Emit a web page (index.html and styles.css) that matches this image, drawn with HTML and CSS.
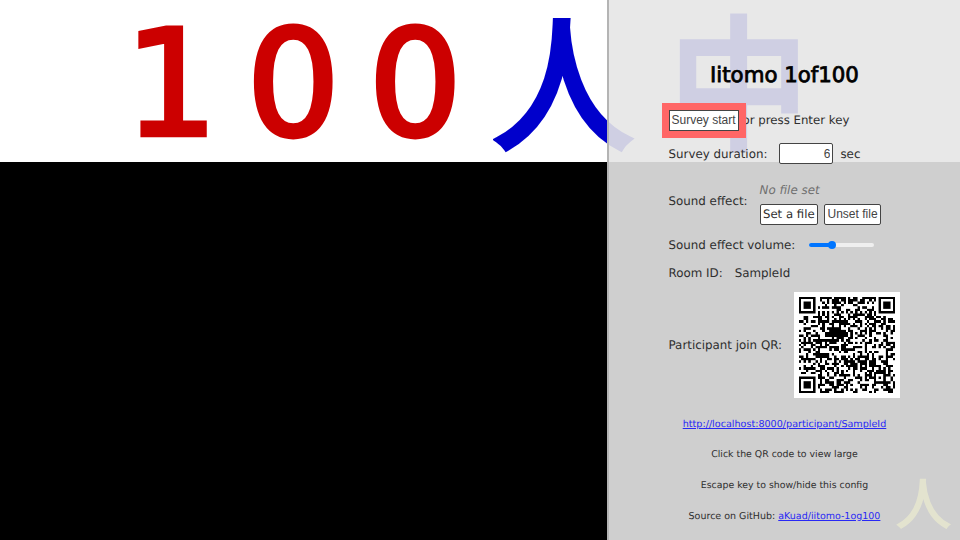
FILE: index.html
```
<!DOCTYPE html>
<html lang="ja">
<head>
<meta charset="utf-8">
<title>Iitomo 1of100</title>
<link rel="stylesheet" href="styles.css">
</head>
<body>
<header class="board">100<span class="kanji">人中</span></header>
<div class="unit">人</div>
<aside class="config">
  <h1 class="title">Iitomo 1of100</h1>
  <div class="row row-start"><button class="btn start">Survey start</button><span class="hint">or press Enter key</span></div>
  <div class="row row-duration"><label>Survey duration:</label><input class="duration" type="text" value="6"><span>sec</span></div>
  <div class="row row-sound">
    <span>Sound effect:</span>
    <div class="sound">
      <div class="nofile">No file set</div>
      <div class="files"><label class="btn pick">Set a file</label><button class="btn unset">Unset file</button></div>
    </div>
  </div>
  <div class="row row-volume"><span>Sound effect volume:</span><div class="slider"><div class="fill"></div><div class="thumb"></div></div></div>
  <div class="row row-room"><span>Room ID:</span><span>SampleId</span></div>
  <div class="row row-qr"><span>Participant join QR:</span><div class="qr"><canvas id="qr" width="256" height="256"></canvas></div></div>
  <p class="note url"><a href="#">http://localhost:8000/participant/SampleId</a></p>
  <p class="note">Click the QR code to view large</p>
  <p class="note">Escape key to show/hide this config</p>
  <p class="note source">Source on GitHub: <a href="#">aKuad/iitomo-1og100</a></p>
</aside>
<script src="qr.js"></script>
</body>
</html>
```
FILE: styles.css
```
* { box-sizing: border-box; }
body {
  margin: 0;
  width: 960px;
  height: 540px;
  overflow: hidden;
  background: #000;
  position: relative;
  font-family: "DejaVu Sans", "Noto Sans CJK JP", sans-serif;
  text-rendering: geometricPrecision;
}
.board {
  height: 162px;
  padding-left: 124.5px;
  background: #fff;
  color: #c00;
  font-size: 147px;
  line-height: 170px;
  letter-spacing: 28.5px;
  white-space: nowrap;
  -webkit-text-stroke: 4.6px #c00;
}
.kanji {
  display: inline-block;
  transform: scaleY(1.04);
  transform-origin: 0 87%;
  font-size: 139px;
  line-height: 1;
  letter-spacing: 37px;
  margin-left: 3px;
  vertical-align: -3px;
  color: #00c;
  -webkit-text-stroke: 6px #00c;
}
.unit {
  position: absolute;
  right: 9px;
  bottom: 7px;
  font-size: 55px;
  line-height: 55px;
  color: #cc0;
  -webkit-text-stroke: 1.6px #cc0;
}
.config {
  position: absolute;
  top: 0;
  right: 0;
  width: 353px;
  height: 540px;
  padding: 60px 0 0 59.5px;
  border-left: 2px solid #b4b4b4;
  background: rgba(229, 229, 229, .9);
  color: #2e2e2e;
  font-size: 11.87px;
  white-space: nowrap;
}
.title {
  margin: 0 0 0 -59.5px;
  height: 30px;
  line-height: 31px;
  text-align: center;
  font-size: 21.3px;
  font-weight: 400;
  color: #000;
  -webkit-text-stroke: .8px #000;
}
.row { display: flex; align-items: center; }
.row-start { height: 30px; margin-top: 15px; }
.row-duration { height: 22px; margin-top: 7.5px; }
.row-sound { height: 44px; margin-top: 16.5px; gap: 12px; }
.row-volume { height: 20px; margin-top: 10px; gap: 14px; }
.row-room { height: 20px; margin-top: 8px; gap: 12px; }
.row-qr { height: 106px; margin-top: 9px; gap: 12px; }
.btn {
  display: block;
  padding: 0;
  height: 21px;
  border: 1px solid #444;
  border-radius: 2px;
  background: #fff;
  color: #444;
  text-align: center;
  font: 12px/19px "Liberation Sans", sans-serif;
}
.start { width: 70px; outline: 7px solid #f66; border-radius: 0; position: relative; }
.hint { margin-left: 4px; font-size: 11.75px; }
.duration {
  width: 54px;
  height: 21px;
  margin: 0 7px 0 12px;
  padding: 0 2px;
  border: 1px solid #444;
  border-radius: 2px;
  text-align: right;
  font: 12px "Liberation Sans", sans-serif;
  color: #444;
}
.sound { margin-top: -1px; }
.row-sound > span { margin-top: -4px; }
.nofile { height: 20px; line-height: 20px; font-style: italic; color: #707070; }
.files { display: flex; gap: 6px; margin-top: 4px; }
.pick { width: 58.5px; font: 11.7px/19px "DejaVu Sans", sans-serif; color: #2e2e2e; }
.unset { width: 57px; }
.slider { position: relative; width: 65px; height: 4px; border-radius: 2px; background: #efefef; }
.fill { width: 23px; height: 4px; border-radius: 2px; background: #0075ff; }
.thumb { position: absolute; left: 19px; top: -2px; width: 8px; height: 8px; border-radius: 50%; background: #0075ff; }
.qr { width: 106px; height: 106px; padding: 5px; background: #fff; }
.qr canvas { display: block; width: 96px; height: 96px; }
.note { margin: 0 0 0 -59.5px; height: 30.8px; line-height: 31px; text-align: center; font-size: 9.37px; }
.note.url { margin-top: 10.5px; font-size: 9.6px; }
.note.source { font-size: 9.5px; }
.note a { color: #2828f5; }
```
FILE: qr.js
```
// Version 6, error correction level H, byte mode QR code.
(function () {
  var TEXT = "http://localhost:8000/participant/SampleId";
  var N = 41, BLOCKS = 4, DATA = 15, EC = 28;

  var exp = [], log = [], x = 1, i;
  for (i = 0; i < 255; i++) { exp[i] = x; log[x] = i; x <<= 1; if (x & 256) x ^= 285; }
  function mul(a, b) { return a && b ? exp[(log[a] + log[b]) % 255] : 0; }

  function codewords() {
    var bits = [];
    function put(v, n) { while (n--) bits.push((v >> n) & 1); }
    put(4, 4); put(TEXT.length, 8);
    for (var i = 0; i < TEXT.length; i++) put(TEXT.charCodeAt(i), 8);
    put(0, 4);
    while (bits.length % 8) bits.push(0);
    var bytes = [];
    for (i = 0; i < bits.length; i += 8) bytes.push(parseInt(bits.slice(i, i + 8).join(""), 2));
    for (i = 0; bytes.length < BLOCKS * DATA; i++) bytes.push(i % 2 ? 17 : 236);
    var gen = [1];
    for (i = 0; i < EC; i++) {
      var next = gen.concat([0]);
      for (var j = 0; j < gen.length; j++) next[j + 1] ^= mul(gen[j], exp[i]);
      gen = next;
    }
    var data = [], ecc = [];
    for (i = 0; i < BLOCKS; i++) {
      var d = bytes.slice(i * DATA, (i + 1) * DATA), r = d.slice();
      for (j = 0; j < EC; j++) r.push(0);
      for (j = 0; j < DATA; j++) {
        var f = r[j];
        for (var k = 0; k <= EC; k++) r[j + k] ^= mul(gen[k], f);
      }
      data.push(d); ecc.push(r.slice(DATA));
    }
    var out = [];
    for (j = 0; j < DATA; j++) for (i = 0; i < BLOCKS; i++) out.push(data[i][j]);
    for (j = 0; j < EC; j++) for (i = 0; i < BLOCKS; i++) out.push(ecc[i][j]);
    return out;
  }

  var masks = [
    function (r, c) { return (r + c) % 2 === 0; },
    function (r) { return r % 2 === 0; },
    function (r, c) { return c % 3 === 0; },
    function (r, c) { return (r + c) % 3 === 0; },
    function (r, c) { return (Math.floor(r / 2) + Math.floor(c / 3)) % 2 === 0; },
    function (r, c) { return r * c % 2 + r * c % 3 === 0; },
    function (r, c) { return (r * c % 2 + r * c % 3) % 2 === 0; },
    function (r, c) { return (r * c % 3 + (r + c) % 2) % 2 === 0; }
  ];

  function build(words, mask, test) {
    var m = [], r, c, i;
    for (r = 0; r < N; r++) m.push(new Array(N).fill(null));
    [[0, 0], [N - 7, 0], [0, N - 7]].forEach(function (p) {
      for (var a = -1; a < 8; a++) for (var b = -1; b < 8; b++) {
        if (!m[p[0] + a] || p[1] + b < 0 || p[1] + b >= N) continue;
        var d = Math.max(Math.abs(a - 3), Math.abs(b - 3));
        m[p[0] + a][p[1] + b] = d !== 2 && d !== 4;
      }
    });
    for (r = -2; r < 3; r++) for (c = -2; c < 3; c++) m[34 + r][34 + c] = Math.max(Math.abs(r), Math.abs(c)) !== 1;
    for (i = 8; i < N - 8; i++) m[6][i] = m[i][6] = i % 2 === 0;
    var info = (2 << 3) | mask, rem = info << 10;
    for (i = 14; i >= 10; i--) if ((rem >> i) & 1) rem ^= 0x537 << (i - 10);
    var fmt = ((info << 10) | rem) ^ 0x5412;
    for (i = 0; i < 15; i++) {
      var on = !test && ((fmt >> i) & 1) === 1;
      m[i < 6 ? i : i < 8 ? i + 1 : N - 15 + i][8] = on;
      m[8][i < 8 ? N - i - 1 : i < 9 ? 15 - i : 14 - i] = on;
    }
    m[N - 8][8] = !test;
    var up = true, bit = 0;
    for (c = N - 1; c > 0; c -= 2) {
      if (c === 6) c--;
      for (i = 0; i < N; i++) {
        r = up ? N - 1 - i : i;
        for (var k = 0; k < 2; k++) if (m[r][c - k] === null) {
          var w = words[bit >> 3] || 0;
          m[r][c - k] = (((w >> (7 - bit % 8)) & 1) === 1) !== masks[mask](r, c - k);
          bit++;
        }
      }
      up = !up;
    }
    return m;
  }

  function penalty(m) {
    var lost = 0, dark = 0, r, c;
    for (r = 0; r < N; r++) for (c = 0; c < N; c++) {
      var same = 0;
      for (var a = -1; a < 2; a++) for (var b = -1; b < 2; b++)
        if ((a || b) && m[r + a] && m[r + a][c + b] === m[r][c]) same++;
      if (same > 5) lost += same - 2;
      if (m[r][c]) dark++;
      if (r < N - 1 && c < N - 1) {
        var s = m[r][c] + m[r + 1][c] + m[r][c + 1] + m[r + 1][c + 1];
        if (s === 0 || s === 4) lost += 3;
      }
      var h = "", v = "";
      for (var k = 0; k < 7; k++) {
        if (c < N - 6) h += +m[r][c + k];
        if (r < N - 6) v += +m[r + k][c];
      }
      if (h === "1011101") lost += 40;
      if (v === "1011101") lost += 40;
    }
    return lost + Math.abs(100 * dark / N / N - 50) * 2;
  }

  var words = codewords(), best = 0, min = Infinity;
  for (i = 0; i < 8; i++) {
    var p = penalty(build(words, i, true));
    if (p < min) { min = p; best = i; }
  }
  var m = build(words, best, false), ctx = document.getElementById("qr").getContext("2d"), s = 256 / N;
  ctx.fillStyle = "#fff";
  ctx.fillRect(0, 0, 256, 256);
  ctx.fillStyle = "#000";
  for (var r = 0; r < N; r++) for (var c = 0; c < N; c++) if (m[r][c]) {
    var x0 = Math.round(c * s), y0 = Math.round(r * s);
    ctx.fillRect(x0, y0, Math.round((c + 1) * s) - x0, Math.round((r + 1) * s) - y0);
  }
})();
```
